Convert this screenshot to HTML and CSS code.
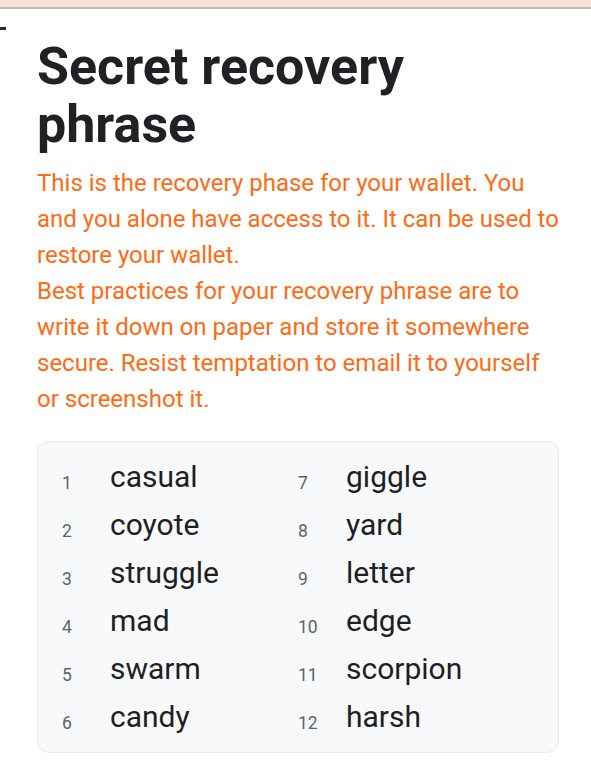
FILE: index.html
```html
<!DOCTYPE html>
<html>
<head>
<meta charset="utf-8">
<link rel="stylesheet" href="styles.css">
</head>
<body>
<div class="topbar"></div>
<div class="dash"></div>
<main class="page">
  <h1 class="title">Secret recovery phrase</h1>
  <p class="desc">This is the recovery phase for your wallet. You and you alone have access to it. It can be used to restore your wallet.<br>Best practices for your recovery phrase are to write it down on paper and store it somewhere secure. Resist temptation to email it to yourself or screenshot it.</p>
  <div class="card">
    <ol class="words">
      <li><span class="num">1</span><span class="word">casual</span></li>
      <li><span class="num">2</span><span class="word">coyote</span></li>
      <li><span class="num">3</span><span class="word">struggle</span></li>
      <li><span class="num">4</span><span class="word">mad</span></li>
      <li><span class="num">5</span><span class="word">swarm</span></li>
      <li><span class="num">6</span><span class="word">candy</span></li>
      <li><span class="num">7</span><span class="word">giggle</span></li>
      <li><span class="num">8</span><span class="word">yard</span></li>
      <li><span class="num">9</span><span class="word">letter</span></li>
      <li><span class="num">10</span><span class="word">edge</span></li>
      <li><span class="num">11</span><span class="word">scorpion</span></li>
      <li><span class="num">12</span><span class="word">harsh</span></li>
    </ol>
  </div>
</main>
</body>
</html>
```

FILE: styles.css
```css
* { box-sizing: border-box; }
html, body { margin: 0; padding: 0; background: #ffffff; }
body { font-family: Roboto, "Noto Sans", sans-serif; }
.topbar {
  height: 9px;
  background: #f6e0d8;
  border-bottom: 2px solid #cbb4ab;
}
.dash {
  width: 6px;
  height: 3px;
  background: #2a2a2e;
  margin-top: 18px;
}
.page {
  padding: 8px 32px 0 37px;
}
.title {
  margin: 0;
  font-size: 52px;
  line-height: 58px;
  font-weight: 700;
  color: #202124;
}
.desc {
  margin: 11px 0 0;
  font-size: 24px;
  line-height: 36px;
  color: #ff6a13;
}
.card {
  margin-top: 24px;
  background: #f8f9fb;
  border: 1px solid #e8e9ec;
  border-radius: 12px;
  padding: 11px 24px;
}
.words {
  list-style: none;
  margin: 0;
  padding: 0;
  display: grid;
  grid-template-rows: repeat(6, 48px);
  grid-auto-flow: column;
  grid-template-columns: 236px 1fr;
}
.words li {
  display: flex;
  align-items: flex-end;
}
.num {
  width: 48px;
  font-size: 17.5px;
  line-height: 36px;
  color: #5f6368;
}
.word {
  font-size: 30px;
  line-height: 48px;
  color: #1f1f1f;
}
```
